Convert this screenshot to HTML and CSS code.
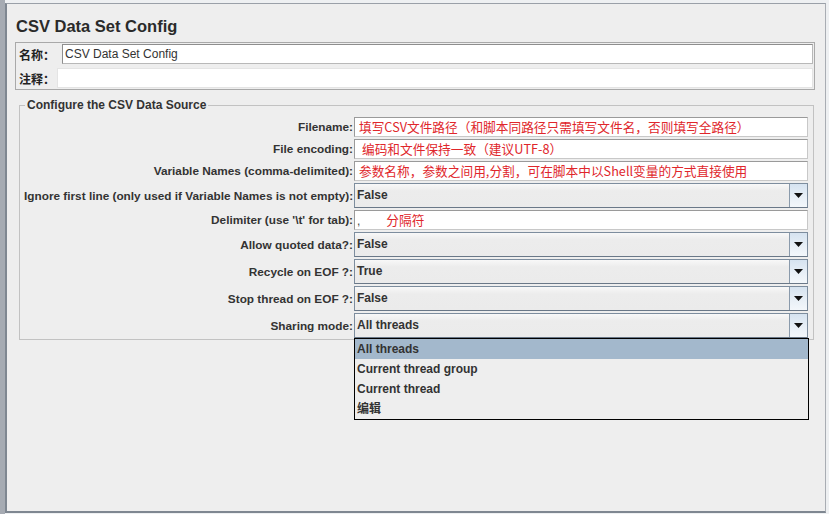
FILE: index.html
```html
<!DOCTYPE html>
<html lang="zh">
<head>
<meta charset="utf-8">
<title>CSV Data Set Config</title>
<link rel="stylesheet" href="styles.css">
</head>
<body>
<div class="screen">
  <div class="dots"></div>
  <div class="panel">
    <h1 class="title">CSV Data Set Config</h1>
    <div class="namebox">
      <div class="nrow">
        <span class="nlabel">名称：</span>
        <div class="ninput name">CSV Data Set Config</div>
      </div>
      <div class="nrow">
        <span class="nlabel">注释：</span>
        <div class="ninput comment"></div>
      </div>
    </div>
    <fieldset class="source">
      <legend>Configure the CSV Data Source</legend>
      <div class="form">
        <label class="lbl">Filename:</label>
        <div class="field">填写CSV文件路径（和脚本同路径只需填写文件名，否则填写全路径）</div>

        <label class="lbl">File encoding:</label>
        <div class="field indent">编码和文件保持一致（建议UTF-8）</div>

        <label class="lbl">Variable Names (comma-delimited):</label>
        <div class="field">参数名称，参数之间用,分割，可在脚本中以Shell变量的方式直接使用</div>

        <label class="lbl">Ignore first line (only used if Variable Names is not empty):</label>
        <div class="combo"><span class="val">False</span><span class="btn"><svg width="9" height="5" viewBox="0 0 9 5"><polygon points="0,0 9,0 4.5,5" fill="#111"/></svg></span></div>

        <label class="lbl">Delimiter (use '\t' for tab):</label>
        <div class="field delim"><span class="comma">,</span><span class="note">分隔符</span></div>

        <label class="lbl">Allow quoted data?:</label>
        <div class="combo"><span class="val">False</span><span class="btn"><svg width="9" height="5" viewBox="0 0 9 5"><polygon points="0,0 9,0 4.5,5" fill="#111"/></svg></span></div>

        <label class="lbl">Recycle on EOF ?:</label>
        <div class="combo"><span class="val">True</span><span class="btn"><svg width="9" height="5" viewBox="0 0 9 5"><polygon points="0,0 9,0 4.5,5" fill="#111"/></svg></span></div>

        <label class="lbl">Stop thread on EOF ?:</label>
        <div class="combo"><span class="val">False</span><span class="btn"><svg width="9" height="5" viewBox="0 0 9 5"><polygon points="0,0 9,0 4.5,5" fill="#111"/></svg></span></div>

        <label class="lbl">Sharing mode:</label>
        <div class="combo open"><span class="val">All threads</span><span class="btn"><svg width="9" height="5" viewBox="0 0 9 5"><polygon points="0,0 9,0 4.5,5" fill="#111"/></svg></span>
          <ul class="popup">
            <li class="item selected">All threads</li>
            <li class="item">Current thread group</li>
            <li class="item">Current thread</li>
            <li class="item">编辑</li>
          </ul>
        </div>
      </div>
    </fieldset>
  </div>
</div>
</body>
</html>
```

FILE: styles.css
```css
* { box-sizing: border-box; }
html, body { margin: 0; padding: 0; }
body {
  width: 829px;
  height: 514px;
  overflow: hidden;
  background: #eef0f2;
  font-family: "Liberation Sans", "Noto Sans CJK SC", Arial, sans-serif;
  color: #2e2e2e;
}
.screen {
  display: flex;
  height: 514px;
  padding-top: 3px;
  position: relative;
}
.dots {
  width: 5px;
  margin-top: -3px;
  height: 514px;
  background-color: #eef0f2;
  background-image: radial-gradient(circle, #a4a9b0 0.7px, transparent 0.9px);
  background-size: 2px 2px;
}
.panel {
  width: 821px;
  height: 510px;
  background: #eeeeee;
  border-left: 2px solid #7f8791;
  border-top: 1px solid #9aa0a8;
  border-right: 1px solid #a9adb3;
  border-bottom: 2px solid #7f8791;
  padding: 12px 10px 0 8px;
}
.title {
  margin: 0 0 6px 1px;
  font-size: 16.5px;
  line-height: 20px;
  font-weight: bold;
  color: #2a2a2a;
}
.namebox {
  border: 1px solid #a9a9a9;
  padding: 1px 1px 1px 3px;
  display: flex;
  flex-direction: column;
  gap: 4px;
}
.nrow {
  display: flex;
  align-items: center;
  height: 20px;
}
.nlabel {
  font-size: 12px;
  font-weight: bold;
  width: 43px;
  color: #222;
}
.ninput {
  flex: 1;
  height: 20px;
  background: #fff;
  font-size: 12px;
  line-height: 18px;
  padding-left: 2px;
  color: #333;
}
.ninput.name {
  border: 1px solid #8e8e8e;
  border-right-color: #b8b8b8;
  border-bottom-color: #b8b8b8;
}
.ninput.comment {
  margin-left: -5px;
  border: 1px solid #e4e4e4;
}
.source {
  margin: 8px 1px 0 4px;
  padding: 5px 5px 1px 4px;
  border: 1px solid #c2c2c2;
  min-width: 0;
}
.source legend {
  font-size: 12px;
  font-weight: bold;
  line-height: 14px;
  padding: 0 2px;
  margin-left: 1px;
  color: #333;
}
.form {
  display: grid;
  grid-template-columns: 329px 1fr;
  column-gap: 1px;
  row-gap: 2px;
  align-items: center;
}
.lbl {
  text-align: right;
  font-size: 11.8px;
  font-weight: bold;
  color: #333;
  white-space: nowrap;
}
.field {
  height: 20px;
  background: #fff;
  border: 1px solid #9a9a9a;
  border-right-color: #c8c8c8;
  border-bottom-color: #c8c8c8;
  color: #e0262b;
  font-family: "Noto Sans CJK SC", "Liberation Sans", sans-serif;
  font-size: 12.7px;
  line-height: 18px;
  padding-left: 4px;
  white-space: nowrap;
  overflow: hidden;
}
.field.indent { padding-left: 7px; }
.field.delim { padding-left: 2px; }
.comma { color: #444; font-family: "Liberation Sans", sans-serif; font-size: 12px; }
.note { margin-left: 26px; }
.combo {
  position: relative;
  display: flex;
  height: 25px;
  border: 1px solid #7d8d9e;
  border-bottom-color: #6a7888;
  background: linear-gradient(#f8f8f8, #ececec 30%, #ebebeb);
}
.combo .val {
  flex: 1;
  font-size: 12px;
  font-weight: bold;
  line-height: 23px;
  padding-left: 2px;
  color: #333;
}
.combo .btn {
  width: 18px;
  border-left: 1px solid #8a9aab;
  background: linear-gradient(#d6e3f0, #e9f0f7 60%, #f3f7fb);
  display: flex;
  align-items: center;
  justify-content: center;
}
.popup {
  position: absolute;
  top: calc(100% + 1px);
  left: -1px;
  right: -2px;
  margin: 0;
  padding: 0;
  list-style: none;
  border: 1px solid #000;
  background: #eeeeee;
  z-index: 5;
}
.item {
  height: 20px;
  line-height: 20px;
  padding-left: 2px;
  font-size: 12px;
  font-weight: bold;
  color: #333;
}
.item.selected { background: #a3b8cc; }
```
